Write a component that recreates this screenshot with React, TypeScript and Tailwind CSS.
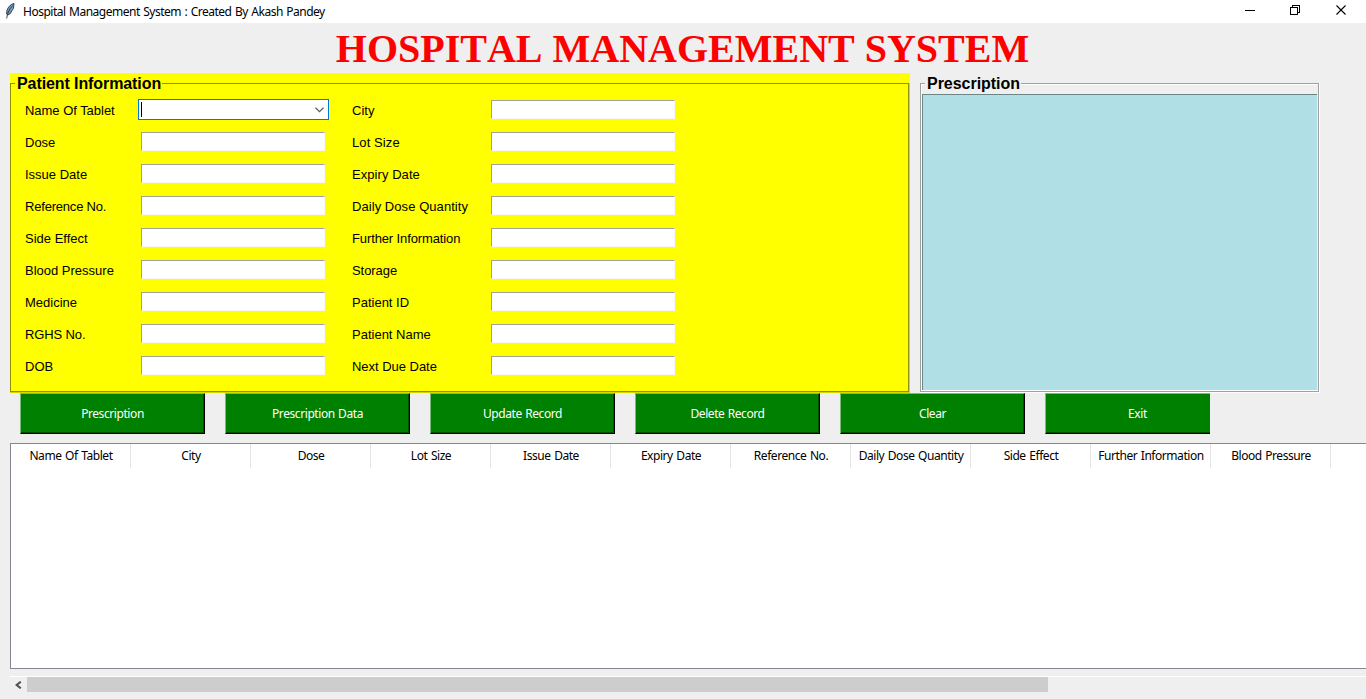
import React from "react";

const leftFields = [
  ["Name Of Tablet", "tracking-[-0.03px]"],
  ["Dose", ""],
  ["Issue Date", ""],
  ["Reference No.", "tracking-[-0.2px]"],
  ["Side Effect", ""],
  ["Blood Pressure", ""],
  ["Medicine", ""],
  ["RGHS No.", "tracking-[-0.12px]"],
  ["DOB", ""],
];

const rightFields = [
  ["City", ""],
  ["Lot Size", "tracking-[0.1px]"],
  ["Expiry Date", "tracking-[0.06px]"],
  ["Daily Dose Quantity", "tracking-[0.06px]"],
  ["Further Information", "tracking-[-0.12px]"],
  ["Storage", "tracking-[-0.06px]"],
  ["Patient ID", ""],
  ["Patient Name", ""],
  ["Next Due Date", "tracking-[-0.03px]"],
];

const actions = ["Prescription", "Prescription Data", "Update Record", "Delete Record", "Clear", "Exit"];

const columns = [
  "Name Of Tablet",
  "City",
  "Dose",
  "Lot Size",
  "Issue Date",
  "Expiry Date",
  "Reference No.",
  "Daily Dose Quantity",
  "Side Effect",
  "Further Information",
  "Blood Pressure",
];

const arial = "font-['Liberation_Sans',Arial,sans-serif]";
const ui = "font-['Noto_Sans','Open_Sans',sans-serif]";

function Entry() {
  return (
    <div className="ml-[3px] h-[19px] w-[184px] border border-b-[#f8f8f8] border-l-[#a0a0a0] border-r-[#f8f8f8] border-t-[#a0a0a0] bg-white" />
  );
}

function Combo() {
  return (
    <div className="flex h-[21px] w-[191px] items-center justify-between border border-[#0078d7] bg-white pl-[2px] pr-[4px]">
      <span className="h-[15px] w-px bg-black" />
      <svg width="9" height="6" viewBox="0 0 9 6" fill="none" stroke="#606060" strokeWidth="1.3">
        <path d="M0.5 0.7 4.5 4.7 8.5 0.7" />
      </svg>
    </div>
  );
}

function Field({ label, tracking, combo }: { label: string; tracking: string; combo?: boolean }) {
  return (
    <div className="flex h-8 items-start">
      <div className={`h-[21px] flex-1 whitespace-nowrap text-[13px] leading-[22px] ${tracking}`}>{label}</div>
      {combo ? (
        <div className="-mt-px">
          <Combo />
        </div>
      ) : (
        <div className="w-[191px]">
          <Entry />
        </div>
      )}
    </div>
  );
}

function Feather() {
  return (
    <svg width="10" height="16" viewBox="0 0 10 16">
      <path d="M9 0.5C6 1 3.2 3.6 1.9 7.5L1.6 11 2.8 12 5.4 10.5 7 7.5 8.4 5.5Z" fill="#6fa3dc" stroke="#1c1c1c" strokeWidth="0.8" />
      <path d="M7.6 2.6 4.8 6 2.4 11.5 1.7 15.5" fill="none" stroke="#1c1c1c" strokeWidth="0.8" />
    </svg>
  );
}

export default function App() {
  return (
    <div className="flex h-[699px] w-[1366px] flex-col overflow-hidden bg-[#efefef] text-black">
      <header className={`flex h-[23px] shrink-0 bg-white pl-[5px] ${ui}`}>
        <div className="w-[18px] pt-[3px]">
          <Feather />
        </div>
        <div className="flex-1 whitespace-nowrap text-[12px] leading-[24px] tracking-[-0.49px] [word-spacing:0.8px]">
          Hospital Management System : Created By Akash Pandey
        </div>
        <div className="flex w-[121px] items-start pt-[5px]">
          <svg width="102" height="10" viewBox="0 0 102 10" fill="none" stroke="#000" shapeRendering="crispEdges">
            <path d="M0 5.5H10" />
            <path d="M45.5 2.5H52.5V9.5H45.5Z M47.5 2.5V0.5H54.5V7.5H52.5" />
            <path d="M91.5 0.5 100.5 9.5M100.5 0.5 91.5 9.5" shapeRendering="auto" strokeWidth="1.1" />
          </svg>
        </div>
      </header>

      <h1 className="h-[50px] shrink-0 whitespace-nowrap pr-px text-center font-['Liberation_Serif','Times_New_Roman',serif] text-[40px] font-bold leading-[51px] text-[#ff0000] [font-kerning:none]">
        HOSPITAL MANAGEMENT SYSTEM
      </h1>

      <main className={`flex h-[320px] shrink-0 gap-[10px] pl-[10px] ${arial}`}>
        <section className="h-[320px] w-[900px] bg-[#ffff00] pt-[10px]">
          <div className="flex h-[310px] flex-col border-b border-r border-[#d8d800]">
            <div className="flex h-[309px] flex-col border border-[#909000]">
              <h2 className="-mt-[11px] ml-[4px] h-[21px] w-[147px] whitespace-nowrap bg-[#ffff00] pl-[2px] text-[16px] font-bold leading-[22px] tracking-[-0.09px]">
                Patient Information
              </h2>
              <div className="flex gap-[23px] pl-[14px] pt-[6px]">
                <div className="w-[304px]">
                  {leftFields.map(([label, tracking], i) => (
                    <Field key={label} label={label} tracking={tracking} combo={i === 0} />
                  ))}
                </div>
                <div className="w-[327px]">
                  {rightFields.map(([label, tracking]) => (
                    <Field key={label} label={label} tracking={tracking} />
                  ))}
                </div>
              </div>
            </div>
          </div>
        </section>

        <section className="h-[320px] w-[400px] pt-[10px]">
          <div className="h-[310px] border-b border-r border-white">
            <div className="flex h-[309px] flex-col border border-[#a0a0a0]">
              <div className="flex h-[10px] shrink-0 border-l border-t border-white">
                <h2 className="-mt-[12px] ml-[3px] h-[21px] w-[96px] whitespace-nowrap bg-[#efefef] pl-[2px] text-[16px] font-bold leading-[22px] tracking-[-0.03px]">
                  Prescription
                </h2>
              </div>
              <div className="flex-1 border-b border-l border-white">
                <div className="h-full w-[395px] border-l border-t border-[#6b8689] bg-[#b0e0e6]" />
              </div>
            </div>
          </div>
        </section>
      </main>

      <nav className={`flex h-[50px] shrink-0 gap-[20px] pl-[20px] ${ui}`}>
        {actions.map((label) => (
          <div key={label} className={`h-[41px] overflow-hidden ${label === "Exit" ? "w-[165px]" : "w-[185px]"}`}>
            <button className="block h-[41px] w-[185px] border-b border-l border-r border-t border-b-black border-l-[#7abd7a] border-r-black border-t-[#7abd7a] bg-[#008000] p-0 text-[12px] text-white">
              <span className="block h-[39px] border-b border-r border-[#005000] pl-px leading-[40px] tracking-[-0.42px] [word-spacing:0.6px]">{label}</span>
            </button>
          </div>
        ))}
      </nav>

      <section className="ml-[10px] h-[226px] shrink-0 overflow-hidden border-b border-l border-t border-[#828790] bg-white">
        <div className={`flex h-[24px] ${ui}`}>
          {columns.map((label) => (
            <div
              key={label}
              className="w-[120px] shrink-0 whitespace-nowrap border-r border-[#e5e5e5] pl-px text-center text-[12px] leading-[24px] tracking-[-0.45px] [word-spacing:0.9px]"
            >
              {label}
            </div>
          ))}
        </div>
      </section>

      <footer className="ml-[10px] mt-[7px] flex h-[17px] border-t border-white">
        <div className="flex w-[17px] pl-[5px] pt-[4px]">
          <svg width="7" height="8" viewBox="0 0 7 8" fill="none" stroke="#505050" strokeWidth="2">
            <path d="M5.8 0.7 1.6 4 5.8 7.3" />
          </svg>
        </div>
        <div className="h-[15px] w-[1021px] bg-[#cdcdcd]" />
      </footer>
    </div>
  );
}
